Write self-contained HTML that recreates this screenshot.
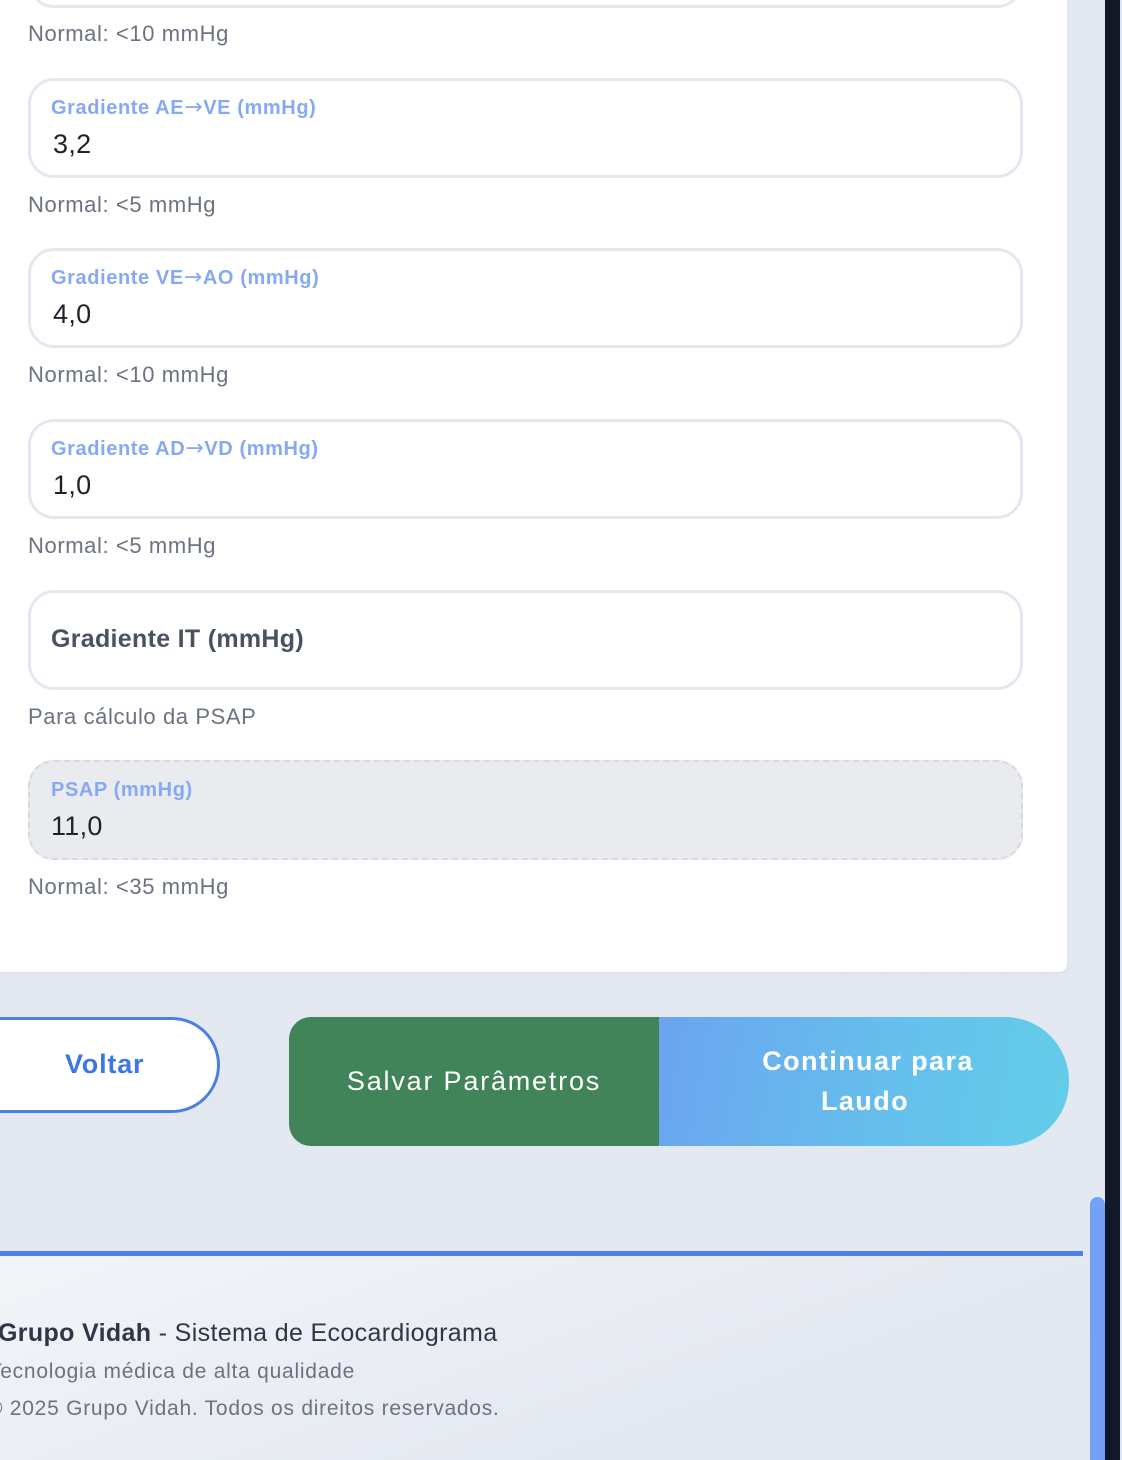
<!DOCTYPE html>
<html><head><meta charset="utf-8">
<style>
*{margin:0;padding:0;box-sizing:border-box}
html,body{width:1122px;height:1460px;overflow:hidden}
body{position:relative;background:linear-gradient(180deg,#e4e8f0 0%,#e3e8f1 100%);font-family:"Liberation Sans",sans-serif}
.card{position:absolute;left:-20px;top:-20px;width:1087px;height:992px;background:#fff;border-radius:8px;box-shadow:0 1px 2px rgba(0,0,0,.06)}
.f{position:absolute;left:28px;width:995px;height:100px;border:3px solid #e2e8f0;border-radius:26px;background:#fff}
.lab{position:absolute;left:20px;top:16px;font-size:20px;font-weight:bold;color:#86a9f3;letter-spacing:0.6px}
.ar{font-family:"DejaVu Sans",sans-serif;font-weight:normal;font-size:22px;line-height:20px}
.val{position:absolute;left:22px;top:48px;font-size:27px;color:#1f2229;letter-spacing:0.3px}
.h{position:absolute;left:28px;font-size:22px;color:#6b7280;letter-spacing:0.6px}
.foot1{position:absolute;left:-2px;top:1319px;font-size:25px;color:#2d3748;letter-spacing:0.35px}
.foot2{position:absolute;font-size:21px;color:#6b7280;letter-spacing:0.75px}
</style></head><body>
<div class="card"></div>
<div class="f" style="top:-92px"></div>
<div class="h" style="top:21px">Normal: &lt;10 mmHg</div>

<div class="f" style="top:78px"><div class="lab">Gradiente AE<span class="ar">→</span>VE (mmHg)</div><div class="val">3,2</div></div>
<div class="h" style="top:192px">Normal: &lt;5 mmHg</div>

<div class="f" style="top:248px"><div class="lab">Gradiente VE<span class="ar">→</span>AO (mmHg)</div><div class="val">4,0</div></div>
<div class="h" style="top:362px">Normal: &lt;10 mmHg</div>

<div class="f" style="top:419px"><div class="lab">Gradiente AD<span class="ar">→</span>VD (mmHg)</div><div class="val">1,0</div></div>
<div class="h" style="top:533px">Normal: &lt;5 mmHg</div>

<div class="f" style="top:590px"><div style="position:absolute;left:20px;top:32px;font-size:25px;font-weight:bold;color:#4a5262;letter-spacing:0.3px">Gradiente IT (mmHg)</div></div>
<div class="h" style="top:704px">Para cálculo da PSAP</div>

<div class="f" style="top:760px;background:#e9ebef;border:2px dashed #d6d9df"><div class="lab" style="top:17px;left:21px">PSAP (mmHg)</div><div class="val" style="top:49px;left:21px">11,0</div></div>
<div class="h" style="top:874px">Normal: &lt;35 mmHg</div>

<div style="position:absolute;left:-60px;top:1017px;width:280px;height:96px;border:3px solid #4a7fe8;border-radius:48px;background:#fff"></div>
<div style="position:absolute;left:65px;top:1049px;font-size:27px;font-weight:bold;color:#3f76e6;letter-spacing:0.8px">Voltar</div>

<div style="position:absolute;left:289px;top:1017px;width:370px;height:129px;background:#41845a;border-radius:22px 0 0 22px;color:#fff;font-size:27px;text-align:center;line-height:129px;letter-spacing:1.8px">Salvar Parâmetros</div>
<div style="position:absolute;left:659px;top:1017px;width:410px;height:129px;background:linear-gradient(100deg,#6ba4f0 0%,#65c1ec 60%,#63cde9 100%);border-radius:0 64px 64px 0;color:#fff;font-size:27px;font-weight:bold;text-align:center;letter-spacing:1.4px;line-height:40px;padding-top:24px"><div style="margin-left:8px">Continuar para</div><div style="margin-left:2px">Laudo</div></div>

<div style="position:absolute;left:0;top:1251px;width:1083px;height:5px;background:#4f7fe8"></div>
<div style="position:absolute;left:0;top:1256px;width:1090px;height:204px;background:linear-gradient(160deg,#f3f5f9 0%,#e5e9f1 60%,#e2e7f0 100%)"></div>
<div class="foot1"><b>Grupo Vidah</b> - Sistema de Ecocardiograma</div>
<div class="foot2" style="left:-11px;top:1360px">Tecnologia médica de alta qualidade</div>
<div class="foot2" style="left:-13px;top:1397px">© 2025 Grupo Vidah. Todos os direitos reservados.</div>

<div style="position:absolute;left:1090px;top:1197px;width:15px;height:270px;background:#73a2f5;border-radius:8px 8px 0 0"></div>
<div style="position:absolute;left:1105px;top:0;width:15px;height:1460px;background:#111827"></div>
<div style="position:absolute;left:1120px;top:0;width:2px;height:1460px;background:#dfe6f5"></div>
</body></html>
